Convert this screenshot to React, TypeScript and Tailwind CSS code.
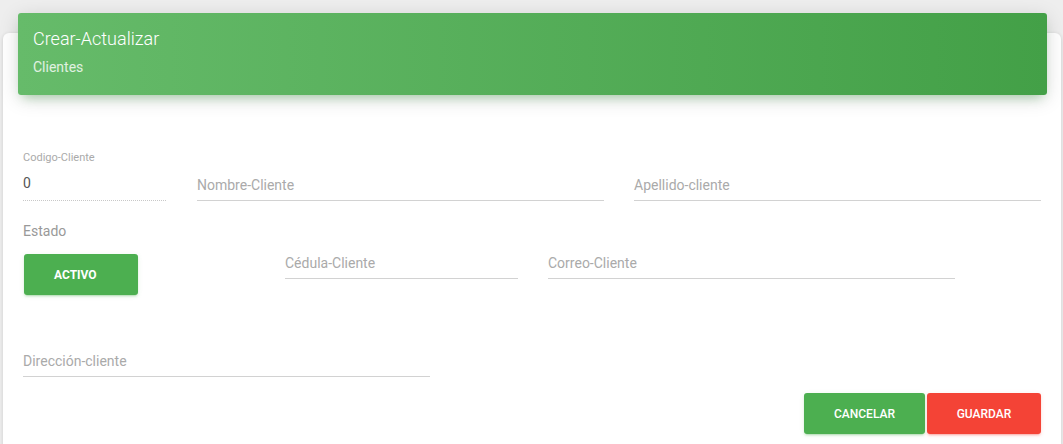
const Field = ({ label, width }: { label: string; width: string }) => (
  <div className={`${width} border-b border-[#d2d2d2] pb-[5px] text-[14px] leading-5 text-[#aaaaaa]`}>{label}</div>
)

const App = () => {
  return (
    <div className="h-screen bg-[#eeeeee] pt-[33px] pl-[3px] pr-[2px] font-['Roboto',sans-serif] overflow-hidden">
      <div className="h-[420px] rounded-[6px] bg-white shadow-[0_1px_4px_0_rgba(0,0,0,0.14)]">
        {/* Header */}
        <div className="relative -top-5 mx-[15px] mr-[14px] h-[82px] rounded-[3px] bg-gradient-to-r from-[#66bb6a] to-[#43a047] px-[15px] pt-[14px] shadow-[0_4px_20px_0_rgba(0,0,0,0.14),0_7px_10px_-5px_rgba(76,175,80,0.4)]">
          <h4 className="text-[18px] font-light leading-6 text-white">Crear-Actualizar</h4>
          <p className="mt-[6px] text-[14px] leading-5 text-white/80">Clientes</p>
        </div>

        <div className="-mt-5 px-[20px]">
          {/* Row 1 */}
          <div className="mt-[56px] flex items-end">
            <div className="w-[145px]">
              <div className="text-[11px] leading-[14px] text-[#aaaaaa]">Codigo-Cliente</div>
              <div className="mt-[8px] border-b border-dotted border-[#c8c8c8] pb-[7px] text-[14px] leading-5 text-[#555555]">0</div>
            </div>
            <div className="ml-[31px]"><Field label="Nombre-Cliente" width="w-[407px]" /></div>
            <div className="ml-[30px]"><Field label="Apellido-cliente" width="w-[407px]" /></div>
          </div>

          {/* Row 2 */}
          <div className="mt-[20px] flex items-start">
            <div className="w-[262px]">
              <div className="text-[14px] leading-5 text-[#999999]">Estado</div>
              <button className="mt-[13px] ml-px flex h-[41px] w-[114px] items-center rounded-[3px] bg-[#4caf50] pl-[30px] text-[12px] font-bold text-white shadow-[0_2px_2px_0_rgba(76,175,80,0.14),0_3px_1px_-2px_rgba(76,175,80,0.2),0_1px_5px_0_rgba(76,175,80,0.12)]">
                ACTIVO
              </button>
            </div>
            <div className="mt-[32px] flex">
              <Field label="Cédula-Cliente" width="w-[233px]" />
              <div className="ml-[30px]"><Field label="Correo-Cliente" width="w-[407px]" /></div>
            </div>
          </div>

          {/* Row 3 */}
          <div className="mt-[56px]">
            <Field label="Dirección-cliente" width="w-[407px]" />
          </div>

          {/* Actions */}
          <div className="mt-[16px] flex justify-end gap-[2px]">
            <button className="h-[41px] w-[121px] rounded-[3px] bg-[#4caf50] text-[12px] font-medium text-white shadow-[0_2px_2px_0_rgba(76,175,80,0.14),0_3px_1px_-2px_rgba(76,175,80,0.2),0_1px_5px_0_rgba(76,175,80,0.12)]">
              CANCELAR
            </button>
            <button className="h-[41px] w-[114px] rounded-[3px] bg-[#f44336] text-[12px] font-medium text-white shadow-[0_2px_2px_0_rgba(244,67,54,0.14),0_3px_1px_-2px_rgba(244,67,54,0.2),0_1px_5px_0_rgba(244,67,54,0.12)]">
              GUARDAR
            </button>
          </div>
        </div>
      </div>
    </div>
  )
}

export default App
